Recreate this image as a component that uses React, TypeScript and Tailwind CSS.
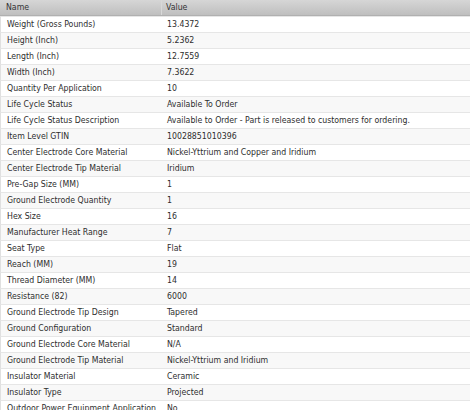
const rows: [string, string][] = [
  ["Weight (Gross Pounds)", "13.4372"],
  ["Height (Inch)", "5.2362"],
  ["Length (Inch)", "12.7559"],
  ["Width (Inch)", "7.3622"],
  ["Quantity Per Application", "10"],
  ["Life Cycle Status", "Available To Order"],
  ["Life Cycle Status Description", "Available to Order - Part is released to customers for ordering."],
  ["Item Level GTIN", "10028851010396"],
  ["Center Electrode Core Material", "Nickel-Yttrium and Copper and Iridium"],
  ["Center Electrode Tip Material", "Iridium"],
  ["Pre-Gap Size (MM)", "1"],
  ["Ground Electrode Quantity", "1"],
  ["Hex Size", "16"],
  ["Manufacturer Heat Range", "7"],
  ["Seat Type", "Flat"],
  ["Reach (MM)", "19"],
  ["Thread Diameter (MM)", "14"],
  ["Resistance (82)", "6000"],
  ["Ground Electrode Tip Design", "Tapered"],
  ["Ground Configuration", "Standard"],
  ["Ground Electrode Core Material", "N/A"],
  ["Ground Electrode Tip Material", "Nickel-Yttrium and Iridium"],
  ["Insulator Material", "Ceramic"],
  ["Insulator Type", "Projected"],
  ["Outdoor Power Equipment Application", "No"],
];

export default function App() {
  return (
    <div className="w-[470px] h-[410px] overflow-hidden bg-white text-[8.7px] text-[#2e2e2e] font-['DejaVu_Sans_Condensed','DejaVu_Sans',sans-serif]">
      <div className="flex h-[16px] bg-gradient-to-b from-[#d6d6d6] to-[#bfbfbf] border-b border-[#b0b0b0] text-[#333]">
        <div className="w-[162px] pl-[6px] leading-[15px] border-r border-[#d8d8d8]">Name</div>
        <div className="flex-1 pl-[4px] leading-[15px]">Value</div>
      </div>
      {rows.map(([name, value], i) => (
        <div
          key={name}
          className={
            i % 2 === 1
              ? "flex h-[16px] bg-[#f8f8f8] border-t border-[#e6e6e6] border-l border-l-[#e0e0e0]"
              : "flex h-[16px] bg-white border-t border-[#e6e6e6] border-l border-l-[#e0e0e0]"
          }
        >
          <div className="w-[162px] pl-[6px] leading-[15px] whitespace-nowrap">{name}</div>
          <div className="flex-1 pl-[4px] leading-[15px] whitespace-nowrap">{value}</div>
        </div>
      ))}
    </div>
  );
}
